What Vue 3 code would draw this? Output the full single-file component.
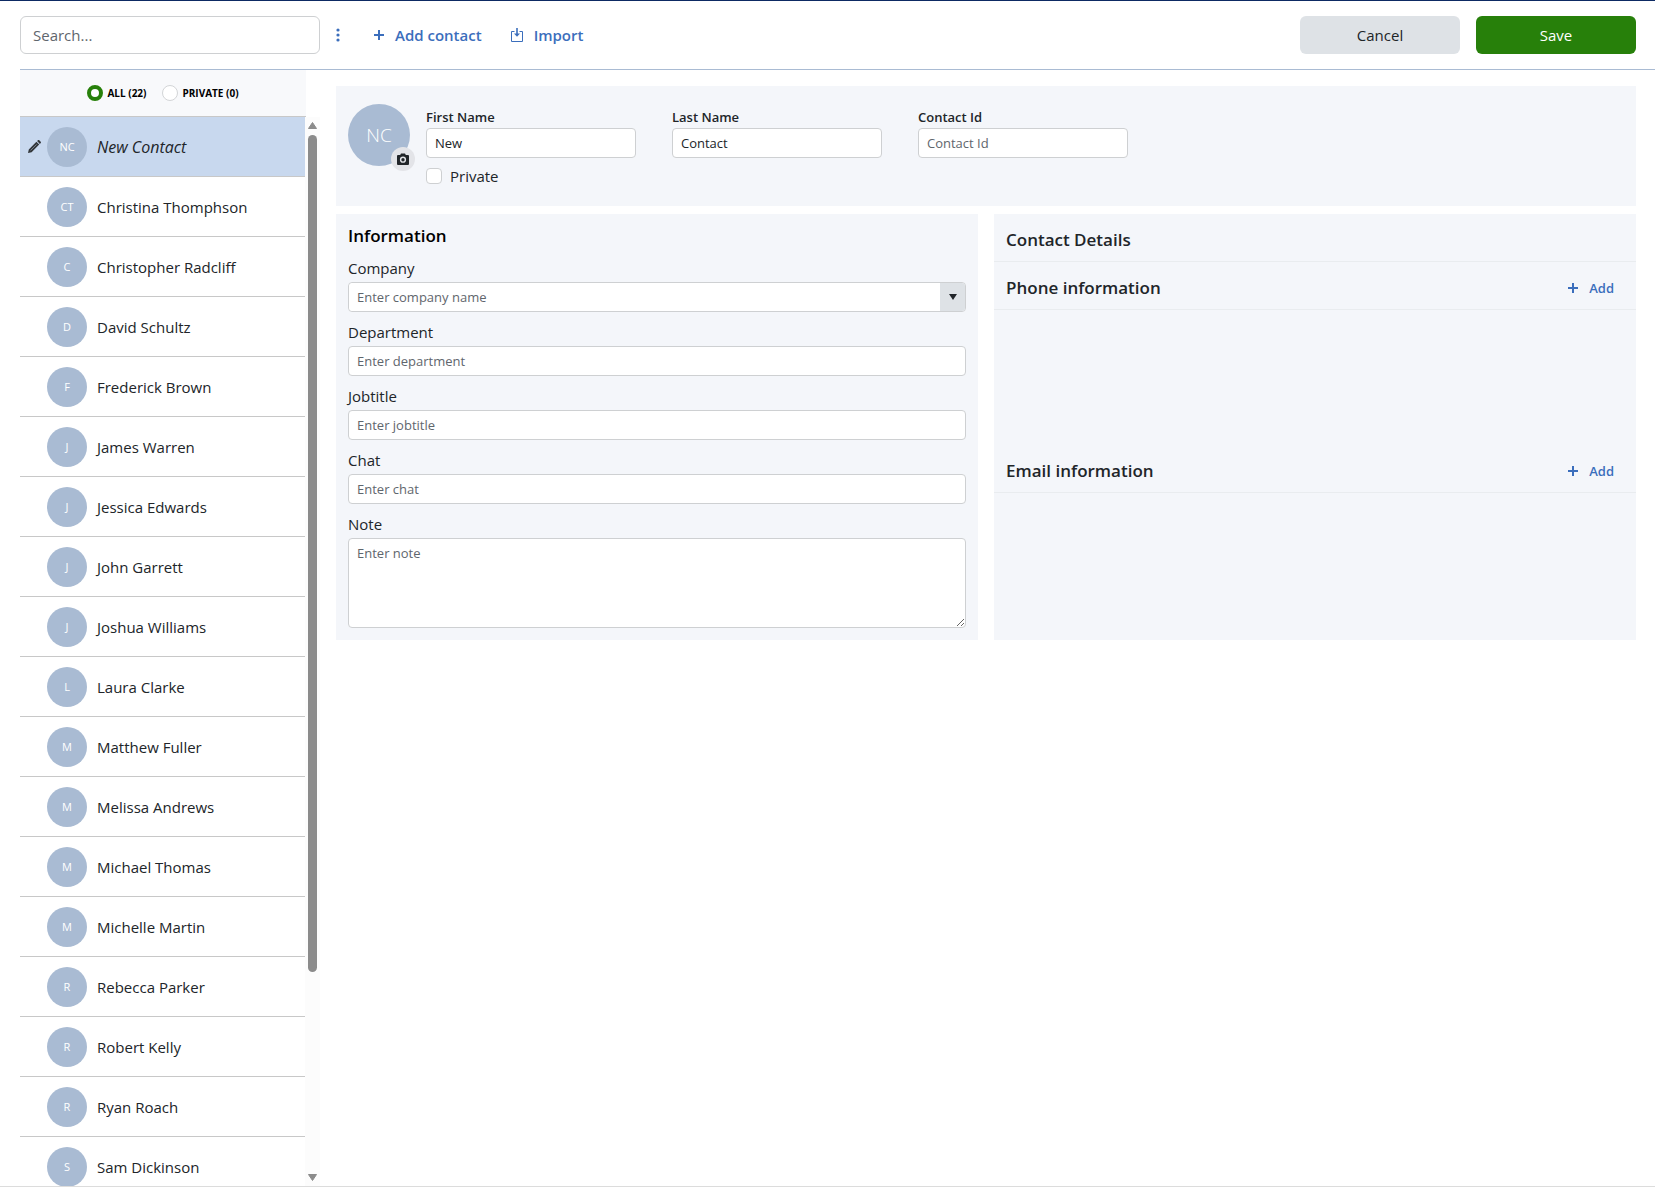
<template>
  <div class="contacts-page">
    <header class="toolbar">
      <input
        v-model="search"
        class="search-input"
        type="text"
        placeholder="Search..."
        aria-label="Search"
      />
      <button class="more-btn" type="button" aria-label="More options">
        <svg width="4" height="14" viewBox="0 0 4 14" fill="currentColor">
          <circle cx="2" cy="2" r="1.6" />
          <circle cx="2" cy="7" r="1.6" />
          <circle cx="2" cy="12" r="1.6" />
        </svg>
      </button>
      <button class="link-btn" type="button">
        <svg width="10" height="10" viewBox="0 0 10 10" fill="currentColor">
          <path d="M4 0h2v4h4v2H6v4H4V6H0V4h4z" />
        </svg>
        Add contact
      </button>
      <button class="link-btn import-btn" type="button">
        <svg width="12" height="14" viewBox="0 0 12 14" fill="none" stroke="currentColor">
          <path d="M3.5 3.5h-3v10h11v-10h-3" />
          <path d="M6 0v7" stroke-width="1.6" />
          <path d="M3 5.4h6L6 8.8z" fill="currentColor" stroke="none" />
        </svg>
        Import
      </button>
      <div class="toolbar-actions">
        <button class="btn btn-cancel" type="button">Cancel</button>
        <button class="btn btn-save" type="button">Save</button>
      </div>
    </header>

    <div class="content">
      <aside class="sidebar">
        <div class="filters">
          <label class="filter">
            <input v-model="filter" type="radio" name="filter" value="all" />
            ALL (22)
          </label>
          <label class="filter">
            <input v-model="filter" type="radio" name="filter" value="private" />
            PRIVATE (0)
          </label>
        </div>

        <div class="list-wrap">
          <ul class="contact-list">
            <li v-for="(contact, index) in contacts" :key="contact.name">
              <button
                class="contact-row"
                :class="{ 'contact-row-active': index === selected }"
                type="button"
                @click="selected = index"
              >
                <span class="edit-mark">
                  <svg v-if="contact.isNew" width="13" height="13" viewBox="0 0 13 13">
                    <path
                      d="M0 13l.8-3.6L8.4 1.8l2.8 2.8-7.6 7.6zM9.1 1.1l.8-.8c.4-.4 1-.4 1.4 0l1.4 1.4c.4.4.4 1 0 1.4l-.8.8z"
                      fill="#33373b"
                    />
                    <path d="M2.6 10.4l6-6" stroke="#8c96a5" stroke-width=".8" />
                  </svg>
                </span>
                <span class="avatar">{{ contact.initials }}</span>
                <span class="contact-name" :class="{ 'contact-name-new': contact.isNew }">
                  {{ contact.name }}
                </span>
              </button>
            </li>
          </ul>
          <div class="scrollbar" aria-hidden="true">
            <svg width="9" height="7" viewBox="0 0 9 7">
              <path d="M4.5 0.5L8.5 6.5h-8z" fill="#8b8b8b" stroke="#8b8b8b" stroke-linejoin="round" />
            </svg>
            <div class="scroll-track">
              <div class="scroll-thumb"></div>
            </div>
            <svg width="9" height="7" viewBox="0 0 9 7">
              <path d="M4.5 6.5L.5.5h8z" fill="#8b8b8b" stroke="#8b8b8b" stroke-linejoin="round" />
            </svg>
          </div>
        </div>
      </aside>

      <main class="details">
        <section class="panel profile">
          <div class="photo">
            <span class="avatar avatar-large">NC</span>
            <button class="camera-btn" type="button" aria-label="Change photo">
              <svg width="12" height="12" viewBox="0 0 12 12">
                <path
                  fill="#212529"
                  fill-rule="evenodd"
                  d="M4 .5h4l.8 1.500h2.200a1 1 0 0 1 1 1v8a1 1 0 0 1-1 1H1a1 1 0 0 1-1-1V3a1 1 0 0 1 1-1h2.200zM6 3.600a3.100 3.100 0 1 0 0 6.200 3.100 3.100 0 0 0 0-6.200zM6 5a1.700 1.700 0 1 1 0 3.400A1.700 1.700 0 0 1 6 5z"
                />
              </svg>
            </button>
          </div>
          <div class="profile-fields">
            <div class="name-row">
              <div class="name-field">
                <label for="first-name">First Name</label>
                <input id="first-name" v-model="form.firstName" class="text-input" type="text" />
              </div>
              <div class="name-field">
                <label for="last-name">Last Name</label>
                <input id="last-name" v-model="form.lastName" class="text-input" type="text" />
              </div>
              <div class="name-field">
                <label for="contact-id">Contact Id</label>
                <input
                  id="contact-id"
                  v-model="form.contactId"
                  class="text-input"
                  type="text"
                  placeholder="Contact Id"
                />
              </div>
            </div>
            <label class="private-check">
              <input v-model="form.isPrivate" type="checkbox" />
              Private
            </label>
          </div>
        </section>

        <div class="panel-row">
          <section class="panel information">
            <h2>Information</h2>
            <div class="field">
              <label for="company">Company</label>
              <div class="combo">
                <input
                  id="company"
                  v-model="form.company"
                  class="text-input"
                  type="text"
                  placeholder="Enter company name"
                />
                <button class="combo-btn" type="button" aria-label="Show companies">
                  <svg width="8" height="6" viewBox="0 0 8 6">
                    <path d="M0 0h8L4 6z" fill="#212529" />
                  </svg>
                </button>
              </div>
            </div>
            <div v-for="field in fields" :key="field.id" class="field">
              <label :for="field.id">{{ field.label }}</label>
              <input
                :id="field.id"
                v-model="form[field.id]"
                class="text-input"
                type="text"
                :placeholder="field.placeholder"
              />
            </div>
            <div class="field">
              <label for="note">Note</label>
              <textarea
                id="note"
                v-model="form.note"
                class="text-input note-input"
                placeholder="Enter note"
              ></textarea>
            </div>
          </section>

          <section class="panel contact-details">
            <div class="details-head">
              <h2>Contact Details</h2>
            </div>
            <div v-for="group in groups" :key="group" class="details-group">
              <div class="details-head">
                <h2>{{ group }}</h2>
                <button class="link-btn add-btn" type="button">
                  <svg width="10" height="10" viewBox="0 0 10 10" fill="currentColor">
                    <path d="M4 0h2v4h4v2H6v4H4V6H0V4h4z" />
                  </svg>
                  Add
                </button>
              </div>
            </div>
          </section>
        </div>
      </main>
    </div>
  </div>
</template>

<script setup>
import { reactive, ref } from "vue";

const search = ref("");
const filter = ref("all");
const selected = ref(0);

const contacts = [
  { initials: "NC", name: "New Contact", isNew: true },
  { initials: "CT", name: "Christina Thomphson" },
  { initials: "C", name: "Christopher Radcliff" },
  { initials: "D", name: "David Schultz" },
  { initials: "F", name: "Frederick Brown" },
  { initials: "J", name: "James Warren" },
  { initials: "J", name: "Jessica Edwards" },
  { initials: "J", name: "John Garrett" },
  { initials: "J", name: "Joshua Williams" },
  { initials: "L", name: "Laura Clarke" },
  { initials: "M", name: "Matthew Fuller" },
  { initials: "M", name: "Melissa Andrews" },
  { initials: "M", name: "Michael Thomas" },
  { initials: "M", name: "Michelle Martin" },
  { initials: "R", name: "Rebecca Parker" },
  { initials: "R", name: "Robert Kelly" },
  { initials: "R", name: "Ryan Roach" },
  { initials: "S", name: "Sam Dickinson" },
];

const form = reactive({
  firstName: "New",
  lastName: "Contact",
  contactId: "",
  isPrivate: false,
  company: "",
  department: "",
  jobtitle: "",
  chat: "",
  note: "",
});

const fields = [
  { id: "department", label: "Department", placeholder: "Enter department" },
  { id: "jobtitle", label: "Jobtitle", placeholder: "Enter jobtitle" },
  { id: "chat", label: "Chat", placeholder: "Enter chat" },
];

const groups = ["Phone information", "Email information"];
</script>

<style>
body {
  margin: 0;
  background: #fff;
}
</style>

<style scoped>
.contacts-page {
  display: flex;
  flex-direction: column;
  height: 100vh;
  box-sizing: border-box;
  border-top: 1px solid #0d2a63;
  border-bottom: 1px solid #dcdcdc;
  font-family: "Segoe UI", "Open Sans", sans-serif;
  font-size: 15px;
  line-height: 24px;
  color: #212529;
}

.contacts-page * {
  box-sizing: border-box;
}

button,
input,
textarea {
  margin: 0;
  font: inherit;
  color: inherit;
}

button {
  padding: 0;
  border: none;
  background: none;
  cursor: pointer;
}

svg {
  display: block;
  flex: none;
}

h2 {
  margin: 0;
  font-size: 17px;
  font-weight: 600;
  line-height: 24px;
}

.toolbar {
  display: flex;
  align-items: center;
  flex: none;
  margin-left: 20px;
  padding: 15px 19px 15px 0;
  border-bottom: 1px solid #a9bbd3;
}

.search-input {
  width: 300px;
  height: 38px;
  padding: 0 12px;
  border: 1px solid #ced0d2;
  border-radius: 6px;
  background: #fff;
}

input::placeholder,
textarea::placeholder {
  color: #5f666d;
  opacity: 1;
}

.more-btn {
  padding: 8px;
  margin-left: 8px;
  color: #3b6ebc;
}

.link-btn {
  display: flex;
  align-items: center;
  gap: 11px;
  margin-left: 26px;
  font-weight: 600;
  color: #3b6ebc;
}

.import-btn {
  margin-left: 29px;
}

.toolbar-actions {
  display: flex;
  gap: 16px;
  margin-left: auto;
}

.btn {
  width: 160px;
  height: 38px;
  border-radius: 6px;
}

.btn-cancel {
  background: #dee2e6;
}

.btn-save {
  background: #27800a;
  color: #fff;
}

.content {
  display: flex;
  flex: 1;
  gap: 16px;
  min-height: 0;
  padding: 0 19px 0 20px;
}

.sidebar {
  display: flex;
  flex-direction: column;
  flex: none;
  width: 300px;
}

.filters {
  display: flex;
  align-items: center;
  justify-content: center;
  flex: none;
  gap: 16px;
  width: 286px;
  height: 47px;
  border-bottom: 1px solid #c8c8c8;
  background: #f8f9fb;
}

.filter {
  display: flex;
  align-items: center;
  gap: 4px;
  font-size: 10px;
  font-weight: 700;
  line-height: 16px;
  color: #000;
}

.filter input {
  appearance: none;
  width: 16px;
  height: 16px;
  border: 1px solid #d3d5d7;
  border-radius: 50%;
  background: #fff;
}

.filter input:checked {
  border: 4px solid #27800a;
}

.list-wrap {
  display: flex;
  flex: 1;
  min-height: 0;
}

.contact-list {
  flex: 1;
  min-width: 0;
  margin: 0;
  padding: 0;
  list-style: none;
  overflow-y: auto;
  scrollbar-width: none;
}

.contact-row {
  display: flex;
  align-items: center;
  width: 100%;
  height: 60px;
  padding-left: 8px;
  border-bottom: 1px solid #c8c8c8;
  text-align: left;
}

.contact-row-active {
  background: #c8d8ee;
}

.edit-mark {
  width: 19px;
}

.avatar {
  display: flex;
  align-items: center;
  justify-content: center;
  flex: none;
  width: 40px;
  height: 40px;
  border-radius: 50%;
  background: #a9bbd3;
  font-size: 11px;
  color: #fff;
}

.contact-name {
  margin-left: 10px;
}

.contact-name-new {
  font-size: 16px;
  font-style: italic;
}

.scrollbar {
  display: flex;
  flex-direction: column;
  align-items: center;
  gap: 6px;
  width: 15px;
  padding: 5px 0;
  background: #fcfcfc;
}

.scroll-track {
  flex: 1;
}

.scroll-thumb {
  width: 9px;
  height: 81%;
  border-radius: 5px;
  background: #8b8b8b;
}

.details {
  flex: 1;
  min-width: 0;
  padding-top: 16px;
}

.panel {
  background: #f4f6fa;
}

.profile {
  display: flex;
  gap: 16px;
  min-height: 120px;
  padding: 18px 12px 16px;
}

.photo {
  position: relative;
  width: 62px;
  height: 62px;
}

.avatar-large {
  width: 62px;
  height: 62px;
  font-size: 19px;
  font-weight: 300;
}

.camera-btn {
  position: absolute;
  right: -5px;
  bottom: -5px;
  display: flex;
  align-items: center;
  justify-content: center;
  width: 24px;
  height: 24px;
  border-radius: 50%;
  background: #e3e4e8;
}

.name-row {
  display: flex;
  gap: 36px;
}

.name-field {
  display: flex;
  flex-direction: column;
  width: 210px;
}

.name-field label {
  padding-top: 2px;
  font-size: 13px;
  font-weight: 600;
  line-height: 22px;
}

.text-input {
  display: block;
  width: 100%;
  height: 30px;
  padding: 0 8px;
  border: 1px solid #ced0d2;
  border-radius: 4px;
  background: #fff;
  font-size: 13px;
}

.private-check {
  display: flex;
  align-items: center;
  gap: 8px;
  width: fit-content;
  margin-top: 6px;
}

.private-check input {
  appearance: none;
  width: 16px;
  height: 16px;
  border: 1px solid #ced0d2;
  border-radius: 4px;
  background: #fff;
}

.private-check input:checked {
  background: #27800a;
}

.panel-row {
  display: grid;
  grid-template-columns: 1fr 1fr;
  gap: 16px;
  margin-top: 8px;
}

.information {
  display: flex;
  flex-direction: column;
  gap: 10px;
  padding: 10px 12px 12px;
}

.information h2 {
  color: #000;
}

.field label {
  display: block;
  padding-bottom: 4px;
  line-height: 20px;
}

.combo {
  display: flex;
  height: 30px;
  border: 1px solid #ced0d2;
  border-radius: 4px;
  background: #fff;
  overflow: hidden;
}

.combo .text-input {
  flex: 1;
  height: 28px;
  border: none;
}

.combo-btn {
  display: flex;
  align-items: center;
  justify-content: center;
  width: 25px;
  background: #dee2e6;
}

.note-input {
  height: 90px;
  padding: 4px 8px;
  line-height: 20px;
  resize: vertical;
}

.details-head {
  display: flex;
  align-items: center;
  justify-content: space-between;
  height: 48px;
  padding: 4px 22px 0 12px;
  border-bottom: 1px solid #e9ecef;
}

.details-group {
  min-height: 183px;
}

.details-group:last-child {
  min-height: 0;
}

.add-btn {
  font-size: 13px;
}
</style>
